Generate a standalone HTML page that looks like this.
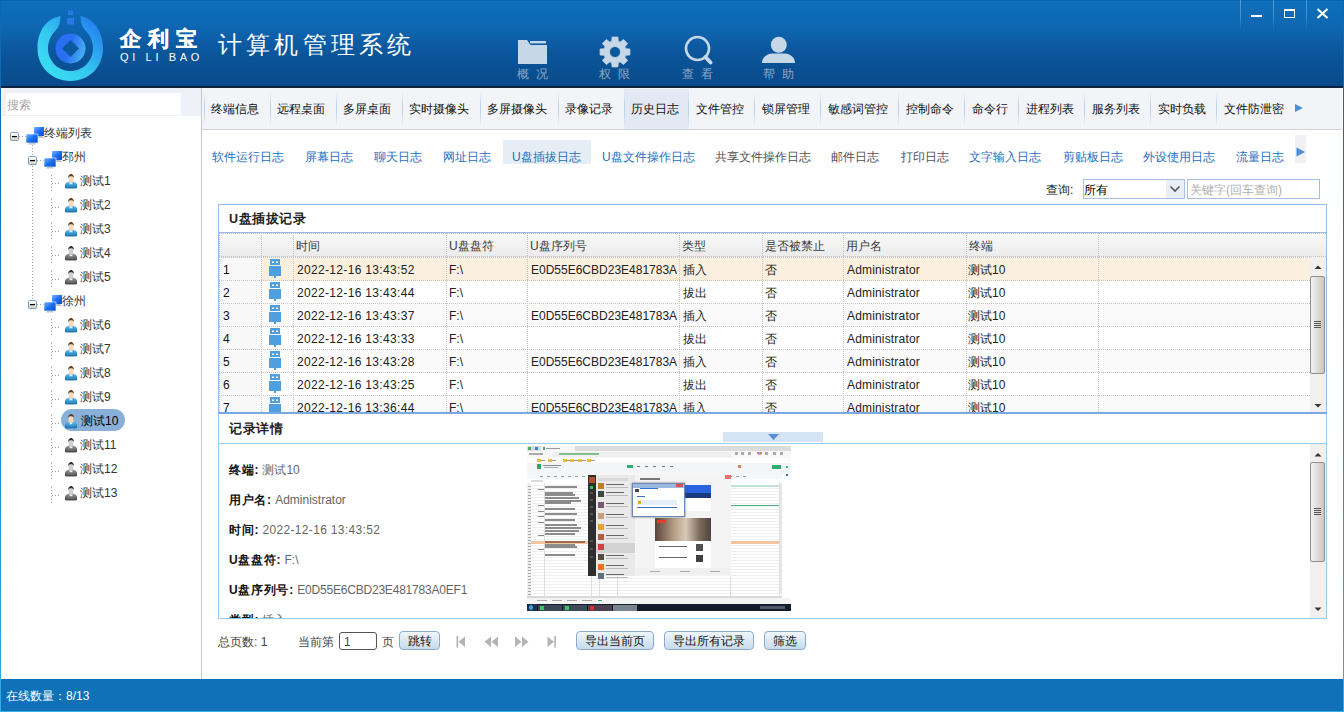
<!DOCTYPE html>
<html><head><meta charset="utf-8">
<style>
*{margin:0;padding:0;box-sizing:border-box}
html,body{width:1344px;height:712px;overflow:hidden;background:#fff}
body{position:relative;font-family:"Liberation Sans",sans-serif;font-size:12px;color:#222}
.a{position:absolute}
#hdr{left:0;top:0;width:1344px;height:87px;background:linear-gradient(#0f6fbb 0,#0e67b2 30%,#0b569c 60%,#094a8a 100%)}
#hdrline{left:0;top:86px;width:1344px;height:2px;background:linear-gradient(#07182c,#0c2a4a)}
.wsep{top:0;width:1px;height:30px;background:linear-gradient(rgba(150,200,240,.5),rgba(150,200,240,.35) 60%,rgba(150,200,240,0))}
.nt{white-space:nowrap;line-height:12px}
</style></head><body>
<div id="hdr" class="a"></div>
<div id="hdrline" class="a"></div>
<div class="a" style="left:0;top:0;width:1344px;height:1px;background:#0866ae"></div>


<!-- logo -->
<svg class="a" style="left:30px;top:5px" width="80" height="80" viewBox="30 5 80 80">
<defs>
<linearGradient id="rg" x1="0" y1="1" x2="1" y2="0">
<stop offset="0" stop-color="#3ee6f2"/><stop offset="0.45" stop-color="#35c8f0"/><stop offset="1" stop-color="#2070f0"/></linearGradient>
<linearGradient id="cg" x1="0" y1="0" x2="1" y2="0.3">
<stop offset="0" stop-color="#2a6ef0"/><stop offset="0.55" stop-color="#2a70f2"/><stop offset="1" stop-color="#46a8f4"/></linearGradient>
</defs>
<path d="M60.5 16 C46 19 37.5 31 37.5 48.5 C37.5 67 52 81 70.5 81 C89 81 103 67 103 48.5 C103 31 94 19 80.5 16 C80.5 22 82 27 85 30 C90 35 93 41 93 48.5 C93 61 83 71 70.5 71 C58 71 48 61 48 48.5 C48 41 51 35 56 30 C59 27 60.5 22 60.5 16 Z" fill="url(#rg)"/>
<circle cx="70.5" cy="48.5" r="15" fill="url(#cg)"/>
<path d="M70.5 40 L79 48.5 L70.5 57 L62 48.5 Z" fill="#0b5aa0"/>
<rect x="68" y="10.5" width="5" height="4.5" fill="#2a78e8"/>
<rect x="67" y="18" width="7" height="6.5" fill="#2a78e8"/>
</svg>
<div class="a nt" style="left:120px;top:28px;color:#fff;font-size:20.5px;font-weight:900;letter-spacing:7px;line-height:22px;-webkit-text-stroke:0.45px #fff">企利宝</div>
<div class="a nt" style="left:120px;top:52px;color:#fff;font-size:11px;letter-spacing:3.65px;line-height:11px">QI LI BAO</div>
<div class="a nt" style="left:218px;top:31px;color:#fff;font-size:24px;font-weight:300;letter-spacing:4.2px;line-height:28px">计算机管理系统</div>

<!-- header icons -->
<svg class="a" style="left:510px;top:30px" width="300" height="40" viewBox="510 30 300 40">
<g fill="#c6d7e8">
<path d="M518 40 H527 L530.5 45 H547 V64 H518 Z"/>
<rect x="530" y="41" width="16" height="2.4"/>
<path d="M611.73 41.29 L612.10 37.08 L617.90 37.08 L618.27 41.29 L620.26 42.11 L623.50 39.40 L627.60 43.50 L624.89 46.74 L625.71 48.73 L629.92 49.10 L629.92 54.90 L625.71 55.27 L624.89 57.26 L627.60 60.50 L623.50 64.60 L620.26 61.89 L618.27 62.71 L617.90 66.92 L612.10 66.92 L611.73 62.71 L609.74 61.89 L606.50 64.60 L602.40 60.50 L605.11 57.26 L604.29 55.27 L600.08 54.90 L600.08 49.10 L604.29 48.73 L605.11 46.74 L602.40 43.50 L606.50 39.40 L609.74 42.11 Z M620.5 52 A5.5 5.5 0 1 0 609.5 52 A5.5 5.5 0 1 0 620.5 52 Z" fill-rule="evenodd" stroke="#c6d7e8" stroke-width="0.8" stroke-linejoin="round"/>
<circle cx="778.8" cy="44.8" r="8"/>
<path d="M762 63 C762 57 767 54 772 53.5 L785 53.5 C790 54 795 57 795 63 Z"/>
</g>
<circle cx="697.5" cy="48.5" r="11.5" fill="none" stroke="#c6d7e8" stroke-width="2.6"/>
<path d="M705.5 57 L710.5 62.5" stroke="#c6d7e8" stroke-width="4" stroke-linecap="round"/>
</svg>
<div class="a nt" style="left:517px;top:68px;color:#8fa8c4;font-size:12px;letter-spacing:7px">概况</div>
<div class="a nt" style="left:599px;top:68px;color:#8fa8c4;font-size:12px;letter-spacing:7px">权限</div>
<div class="a nt" style="left:682px;top:68px;color:#8fa8c4;font-size:12px;letter-spacing:7px">查看</div>
<div class="a nt" style="left:763px;top:68px;color:#8fa8c4;font-size:12px;letter-spacing:7px">帮助</div>

<!-- window buttons -->
<div class="a wsep" style="left:1240px"></div>
<div class="a wsep" style="left:1273px"></div>
<div class="a wsep" style="left:1306px"></div>
<div class="a" style="left:1251px;top:15px;width:11px;height:2px;background:#fff"></div>
<div class="a" style="left:1284px;top:9px;width:11px;height:9px;border:1.6px solid #fff;border-top-width:2.6px"></div>
<svg class="a" style="left:1316px;top:8px" width="13" height="11" viewBox="0 0 13 11"><path d="M1.5 1 L11.5 10 M11.5 1 L1.5 10" stroke="#fff" stroke-width="2.2"/></svg>


<!-- left panel -->
<div class="a" style="left:2px;top:88px;width:199px;height:28px;background:#eef2f8"></div>
<div class="a" style="left:6px;top:93px;width:175px;height:22px;background:#fff"></div>
<div class="a nt" style="left:7px;top:99px;color:#a8a8a8">搜索</div>
<div class="a" style="left:201px;top:88px;width:1px;height:591px;background:#c8c8c8"></div>
<svg class="a" style="left:0;top:116px" width="201" height="400" viewBox="0 116 201 400">
<defs>
<linearGradient id="bx" x1="0" y1="0" x2="0" y2="1"><stop offset="0" stop-color="#fff"/><stop offset="1" stop-color="#d8d0c0"/></linearGradient>
<linearGradient id="mon" x1="0" y1="0" x2="1" y2="1"><stop offset="0" stop-color="#7ab8ff"/><stop offset="0.5" stop-color="#1a70f0"/><stop offset="1" stop-color="#0a50d0"/></linearGradient>
<g id="comp">
<rect x="8" y="0" width="10" height="9" fill="url(#mon)"/>
<path d="M10 9 h6 l2 2 h-8z" fill="#b8c0c8"/>
<rect x="0" y="7" width="12" height="9" fill="url(#mon)" stroke="#fff" stroke-width="0.6"/>
<path d="M3 16 h6 l1 1.5 h-8z" fill="#c0c8d0"/>
</g>
<g id="box">
<rect x="0.5" y="0.5" width="8" height="8" rx="1" fill="url(#bx)" stroke="#7a9cc0"/>
<rect x="2" y="4" width="5" height="1.2" fill="#000"/>
</g>
<radialGradient id="bodyb" cx="0.5" cy="0.1" r="0.9"><stop offset="0" stop-color="#7cc4f0"/><stop offset="0.6" stop-color="#3a98d0"/><stop offset="1" stop-color="#1e78b8"/></radialGradient>
<radialGradient id="bodyg" cx="0.5" cy="0.1" r="0.9"><stop offset="0" stop-color="#a8a8a8"/><stop offset="0.6" stop-color="#707070"/><stop offset="1" stop-color="#505050"/></radialGradient>
<g id="ub">
<path d="M0 14 V11.5 C0 9 3 7.6 6 7.6 C9 7.6 12 9 12 11.5 V14 Z" fill="url(#bodyb)"/>
<path d="M0.5 13.5 h11 l-0.5 1 h-10z" fill="#2a78b0"/>
<rect x="3.6" y="2" width="4.8" height="6.8" rx="1.5" fill="#f6d8bc"/>
<path d="M3.2 4 C3 1 5 0 6 0 C7.5 0 9 1 8.8 4 C8 2.5 7 2.3 6 2.3 C5 2.3 4 2.5 3.2 4Z" fill="#5e3c22"/>
<path d="M4.5 9 h3 l-1.5 1.4z" fill="#fff"/>
</g>
<g id="ug">
<path d="M0 14 V11.5 C0 9 3 7.6 6 7.6 C9 7.6 12 9 12 11.5 V14 Z" fill="url(#bodyg)"/>
<path d="M0.5 13.5 h11 l-0.5 1 h-10z" fill="#505050"/>
<rect x="3.6" y="2" width="4.8" height="6.8" rx="1.5" fill="#d0d0d0"/>
<path d="M3.2 4 C3 1 5 0 6 0 C7.5 0 9 1 8.8 4 C8 2.5 7 2.3 6 2.3 C5 2.3 4 2.5 3.2 4Z" fill="#303030"/>
<path d="M4.5 9 h3 l-1.5 1.4z" fill="#fff"/>
</g>
</defs>
<g stroke="#a0a0a0" stroke-width="1" stroke-dasharray="1 2" fill="none">
<path d="M32.5 142 V301"/>
<path d="M19 136.5 H26"/>
<path d="M37 160.5 H44"/>
<path d="M37 304.5 H44"/>
<path d="M51.5 175.0 V192.0"/><path d="M51.5 199.0 V216.0"/><path d="M51.5 223.0 V240.0"/><path d="M51.5 247.0 V264.0"/><path d="M51.5 271.0 V288.0"/><path d="M51.5 319.0 V336.0"/><path d="M51.5 343.0 V360.0"/><path d="M51.5 367.0 V384.0"/><path d="M51.5 391.0 V408.0"/><path d="M51.5 415.0 V432.0"/><path d="M51.5 439.0 V456.0"/><path d="M51.5 463.0 V480.0"/><path d="M51.5 487.0 V504.0"/>
</g>
<g stroke="#a0a0a0" stroke-width="1" stroke-dasharray="1 2" fill="none">
<path d="M52 183.5 H60"/><path d="M52 207.5 H60"/><path d="M52 231.5 H60"/><path d="M52 255.5 H60"/><path d="M52 279.5 H60"/>
<path d="M52 327.5 H60"/><path d="M52 351.5 H60"/><path d="M52 375.5 H60"/><path d="M52 399.5 H60"/><path d="M52 423.5 H60"/>
<path d="M52 447.5 H60"/><path d="M52 471.5 H60"/><path d="M52 495.5 H60"/>
</g>
<use href="#box" x="10" y="132"/>
<use href="#comp" x="26" y="127"/>
<use href="#box" x="28" y="156"/>
<use href="#comp" x="44" y="151"/>
<use href="#box" x="28" y="300"/>
<use href="#comp" x="44" y="295"/>
<rect x="61" y="409" width="64" height="22" rx="11" fill="#88b0d8"/>
<use href="#ub" x="65" y="174"/>
<use href="#ub" x="65" y="198"/>
<use href="#ub" x="65" y="222"/>
<use href="#ug" x="65" y="246"/>
<use href="#ug" x="65" y="270"/>
<use href="#ub" x="65" y="318"/>
<use href="#ub" x="65" y="342"/>
<use href="#ub" x="65" y="366"/>
<use href="#ub" x="65" y="390"/>
<use href="#ub" x="65" y="414"/>
<use href="#ug" x="65" y="438"/>
<use href="#ug" x="65" y="462"/>
<use href="#ug" x="65" y="486"/>
</svg>
<div class="a nt" style="left:44px;top:127px;color:#333">终端列表</div>
<div class="a nt" style="left:62px;top:151px;color:#333">邳州</div>
<div class="a nt" style="left:62px;top:295px;color:#333">徐州</div>
<div class="a nt" style="left:80px;top:175px;color:#333">测试1</div>
<div class="a nt" style="left:80px;top:199px;color:#333">测试2</div>
<div class="a nt" style="left:80px;top:223px;color:#333">测试3</div>
<div class="a nt" style="left:80px;top:247px;color:#333">测试4</div>
<div class="a nt" style="left:80px;top:271px;color:#333">测试5</div>
<div class="a nt" style="left:80px;top:319px;color:#333">测试6</div>
<div class="a nt" style="left:80px;top:343px;color:#333">测试7</div>
<div class="a nt" style="left:80px;top:367px;color:#333">测试8</div>
<div class="a nt" style="left:80px;top:391px;color:#333">测试9</div>
<div class="a nt" style="left:81px;top:415px;color:#000">测试10</div>
<div class="a nt" style="left:80px;top:439px;color:#333">测试11</div>
<div class="a nt" style="left:80px;top:463px;color:#333">测试12</div>
<div class="a nt" style="left:80px;top:487px;color:#333">测试13</div>


<!-- tab bar -->
<div class="a" style="left:202px;top:88px;width:1140px;height:41px;background:#f2f4f8"></div>
<div class="a" style="left:202px;top:129px;width:1140px;height:1px;background:#cfd3d8"></div>
<div class="a" style="left:204px;top:92px;width:1px;height:34px;background:linear-gradient(rgba(190,215,240,0),#b8d4f0 40%,#b8d4f0 60%,rgba(190,215,240,0))"></div>
<div class="a nt" style="left:211.1px;top:103px;color:#111">终端信息</div>
<div class="a" style="left:270px;top:92px;width:1px;height:34px;background:linear-gradient(rgba(190,215,240,0),#b8d4f0 40%,#b8d4f0 60%,rgba(190,215,240,0))"></div>
<div class="a nt" style="left:277.1px;top:103px;color:#111">远程桌面</div>
<div class="a" style="left:336px;top:92px;width:1px;height:34px;background:linear-gradient(rgba(190,215,240,0),#b8d4f0 40%,#b8d4f0 60%,rgba(190,215,240,0))"></div>
<div class="a nt" style="left:343.1px;top:103px;color:#111">多屏桌面</div>
<div class="a" style="left:402px;top:92px;width:1px;height:34px;background:linear-gradient(rgba(190,215,240,0),#b8d4f0 40%,#b8d4f0 60%,rgba(190,215,240,0))"></div>
<div class="a nt" style="left:409.1px;top:103px;color:#111">实时摄像头</div>
<div class="a" style="left:480px;top:92px;width:1px;height:34px;background:linear-gradient(rgba(190,215,240,0),#b8d4f0 40%,#b8d4f0 60%,rgba(190,215,240,0))"></div>
<div class="a nt" style="left:487.1px;top:103px;color:#111">多屏摄像头</div>
<div class="a" style="left:558px;top:92px;width:1px;height:34px;background:linear-gradient(rgba(190,215,240,0),#b8d4f0 40%,#b8d4f0 60%,rgba(190,215,240,0))"></div>
<div class="a nt" style="left:565.1px;top:103px;color:#111">录像记录</div>
<div class="a" style="left:624px;top:89px;width:65px;height:40px;background:#e2e9f2"></div>
<div class="a" style="left:624px;top:92px;width:1px;height:34px;background:linear-gradient(rgba(190,215,240,0),#b8d4f0 40%,#b8d4f0 60%,rgba(190,215,240,0))"></div>
<div class="a nt" style="left:631.1px;top:103px;color:#111">历史日志</div>
<div class="a" style="left:688px;top:92px;width:1px;height:34px;background:linear-gradient(rgba(190,215,240,0),#b8d4f0 40%,#b8d4f0 60%,rgba(190,215,240,0))"></div>
<div class="a nt" style="left:696.1px;top:103px;color:#111">文件管控</div>
<div class="a" style="left:754px;top:92px;width:1px;height:34px;background:linear-gradient(rgba(190,215,240,0),#b8d4f0 40%,#b8d4f0 60%,rgba(190,215,240,0))"></div>
<div class="a nt" style="left:762.1px;top:103px;color:#111">锁屏管理</div>
<div class="a" style="left:820px;top:92px;width:1px;height:34px;background:linear-gradient(rgba(190,215,240,0),#b8d4f0 40%,#b8d4f0 60%,rgba(190,215,240,0))"></div>
<div class="a nt" style="left:828.1px;top:103px;color:#111">敏感词管控</div>
<div class="a" style="left:898px;top:92px;width:1px;height:34px;background:linear-gradient(rgba(190,215,240,0),#b8d4f0 40%,#b8d4f0 60%,rgba(190,215,240,0))"></div>
<div class="a nt" style="left:906.1px;top:103px;color:#111">控制命令</div>
<div class="a" style="left:964px;top:92px;width:1px;height:34px;background:linear-gradient(rgba(190,215,240,0),#b8d4f0 40%,#b8d4f0 60%,rgba(190,215,240,0))"></div>
<div class="a nt" style="left:972.1px;top:103px;color:#111">命令行</div>
<div class="a" style="left:1018px;top:92px;width:1px;height:34px;background:linear-gradient(rgba(190,215,240,0),#b8d4f0 40%,#b8d4f0 60%,rgba(190,215,240,0))"></div>
<div class="a nt" style="left:1026.1px;top:103px;color:#111">进程列表</div>
<div class="a" style="left:1084px;top:92px;width:1px;height:34px;background:linear-gradient(rgba(190,215,240,0),#b8d4f0 40%,#b8d4f0 60%,rgba(190,215,240,0))"></div>
<div class="a nt" style="left:1092.1px;top:103px;color:#111">服务列表</div>
<div class="a" style="left:1150px;top:92px;width:1px;height:34px;background:linear-gradient(rgba(190,215,240,0),#b8d4f0 40%,#b8d4f0 60%,rgba(190,215,240,0))"></div>
<div class="a nt" style="left:1158.1px;top:103px;color:#111">实时负载</div>
<div class="a" style="left:1216px;top:92px;width:1px;height:34px;background:linear-gradient(rgba(190,215,240,0),#b8d4f0 40%,#b8d4f0 60%,rgba(190,215,240,0))"></div>
<div class="a nt" style="left:1224.1px;top:103px;color:#111">文件防泄密</div>
<svg class="a" style="left:1294px;top:103px" width="10" height="10"><path d="M1 1 L9 5 L1 9Z" fill="#4a90d8"/></svg>

<!-- sub tabs -->
<div class="a" style="left:503px;top:140px;width:88px;height:24px;background:#e6edf5"></div>
<div class="a" style="left:1295px;top:135px;width:11px;height:28px;background:#eef0f4"></div>
<svg class="a" style="left:1296px;top:147px" width="10" height="11"><path d="M0.5 0.5 L9 5 L0.5 9.5Z" fill="#4a90d8"/></svg>
<div class="a nt" style="left:212px;top:151px;color:#1d6fc2">软件运行日志</div>
<div class="a nt" style="left:305px;top:151px;color:#1d6fc2">屏幕日志</div>
<div class="a nt" style="left:374px;top:151px;color:#1d6fc2">聊天日志</div>
<div class="a nt" style="left:443px;top:151px;color:#1d6fc2">网址日志</div>
<div class="a nt" style="left:512px;top:151px;color:#1d6fc2">U盘插拔日志</div>
<div class="a nt" style="left:602px;top:151px;color:#1d6fc2">U盘文件操作日志</div>
<div class="a nt" style="left:715px;top:151px;color:#505050">共享文件操作日志</div>
<div class="a nt" style="left:831px;top:151px;color:#505050">邮件日志</div>
<div class="a nt" style="left:901px;top:151px;color:#505050">打印日志</div>
<div class="a nt" style="left:969px;top:151px;color:#1d6fc2">文字输入日志</div>
<div class="a nt" style="left:1063px;top:151px;color:#1d6fc2">剪贴板日志</div>
<div class="a nt" style="left:1143px;top:151px;color:#1d6fc2">外设使用日志</div>
<div class="a nt" style="left:1236px;top:151px;color:#1d6fc2">流量日志</div>


<!-- query -->
<div class="a nt" style="left:1046px;top:184px;color:#222">查询:</div>
<div class="a" style="left:1083px;top:179px;width:102px;height:20px;border:1px solid #a6bfe2;background:#fff"></div>
<div class="a" style="left:1166px;top:180px;width:18px;height:18px;background:#e8eff8"></div>
<svg class="a" style="left:1169px;top:185px" width="12" height="8"><path d="M1.5 1.5 L6 6 L10.5 1.5" stroke="#555" stroke-width="1.6" fill="none"/></svg>
<div class="a nt" style="left:1084px;top:184px;color:#000">所有</div>
<div class="a" style="left:1187px;top:179px;width:133px;height:20px;border:1px solid #a6bfe2;background:#fff"></div>
<div class="a nt" style="left:1190px;top:184px;color:#b0b0b0">关键字(回车查询)</div>

<!-- grid panel -->
<div class="a" style="left:218px;top:204px;width:1109px;height:210px;border:1px solid #99bbe8;border-bottom:2px solid #7aa8e0;background:#fff"></div>
<div class="a nt" style="left:229px;top:213px;color:#222;font-weight:bold;font-size:12.5px;letter-spacing:0.6px">U盘插拔记录</div>
<div class="a" style="left:219px;top:232px;width:1107px;height:1px;background:#99bbe8"></div>
<div class="a" style="left:219px;top:233px;width:1107px;height:24px;background:linear-gradient(#f9f9f9,#ebebeb)"></div>
<div class="a nt" style="left:296px;top:240px;color:#3c3c3c">时间</div>
<div class="a nt" style="left:449px;top:240px;color:#3c3c3c">U盘盘符</div>
<div class="a nt" style="left:530px;top:240px;color:#3c3c3c">U盘序列号</div>
<div class="a nt" style="left:682px;top:240px;color:#3c3c3c">类型</div>
<div class="a nt" style="left:765px;top:240px;color:#3c3c3c">是否被禁止</div>
<div class="a nt" style="left:846px;top:240px;color:#3c3c3c">用户名</div>
<div class="a nt" style="left:969px;top:240px;color:#3c3c3c">终端</div>
<div class="a" style="left:0;top:0;width:1344px;height:412px;overflow:hidden">
<div class="a" style="left:219px;top:257px;width:42px;height:155px;background:#f8f8f8"></div>
<div class="a" style="left:262px;top:258px;width:1048px;height:23px;background:#fbefdf"></div>
<div class="a nt" style="left:223px;top:264px;color:#111">1</div>
<svg class="a" style="left:269px;top:259px" width="12" height="20" viewBox="0 0 12 20"><rect x="1" y="0" width="10" height="6" fill="#4d9fe0"/><rect x="3" y="2.5" width="2" height="1.5" fill="#fff"/><rect x="7" y="2.5" width="2" height="1.5" fill="#fff"/><rect x="0" y="7" width="12" height="10" fill="#4d9fe0"/><rect x="5" y="17" width="2" height="2" fill="#4d9fe0"/></svg>
<div class="a nt" style="left:297px;top:264px;color:#222;letter-spacing:.33px">2022-12-16 13:43:52</div>
<div class="a nt" style="left:449px;top:264px;color:#222">F:\</div>
<div class="a nt" style="left:531px;top:264px;width:146px;overflow:hidden;color:#222">E0D55E6CBD23E481783A0EF1</div>
<div class="a nt" style="left:683px;top:264px;color:#222">插入</div>
<div class="a nt" style="left:765px;top:264px;color:#222">否</div>
<div class="a nt" style="left:847px;top:264px;color:#222;letter-spacing:.17px">Administrator</div>
<div class="a nt" style="left:968px;top:264px;color:#222">测试10</div>
<div class="a nt" style="left:223px;top:287px;color:#111">2</div>
<svg class="a" style="left:269px;top:282px" width="12" height="20" viewBox="0 0 12 20"><rect x="1" y="0" width="10" height="6" fill="#4d9fe0"/><rect x="3" y="2.5" width="2" height="1.5" fill="#fff"/><rect x="7" y="2.5" width="2" height="1.5" fill="#fff"/><rect x="0" y="7" width="12" height="10" fill="#4d9fe0"/><rect x="5" y="17" width="2" height="2" fill="#4d9fe0"/></svg>
<div class="a nt" style="left:297px;top:287px;color:#222;letter-spacing:.33px">2022-12-16 13:43:44</div>
<div class="a nt" style="left:449px;top:287px;color:#222">F:\</div>
<div class="a nt" style="left:683px;top:287px;color:#222">拔出</div>
<div class="a nt" style="left:765px;top:287px;color:#222">否</div>
<div class="a nt" style="left:847px;top:287px;color:#222;letter-spacing:.17px">Administrator</div>
<div class="a nt" style="left:968px;top:287px;color:#222">测试10</div>
<div class="a" style="left:262px;top:304px;width:1048px;height:23px;background:#fafafa"></div>
<div class="a nt" style="left:223px;top:310px;color:#111">3</div>
<svg class="a" style="left:269px;top:305px" width="12" height="20" viewBox="0 0 12 20"><rect x="1" y="0" width="10" height="6" fill="#4d9fe0"/><rect x="3" y="2.5" width="2" height="1.5" fill="#fff"/><rect x="7" y="2.5" width="2" height="1.5" fill="#fff"/><rect x="0" y="7" width="12" height="10" fill="#4d9fe0"/><rect x="5" y="17" width="2" height="2" fill="#4d9fe0"/></svg>
<div class="a nt" style="left:297px;top:310px;color:#222;letter-spacing:.33px">2022-12-16 13:43:37</div>
<div class="a nt" style="left:449px;top:310px;color:#222">F:\</div>
<div class="a nt" style="left:531px;top:310px;width:146px;overflow:hidden;color:#222">E0D55E6CBD23E481783A0EF1</div>
<div class="a nt" style="left:683px;top:310px;color:#222">插入</div>
<div class="a nt" style="left:765px;top:310px;color:#222">否</div>
<div class="a nt" style="left:847px;top:310px;color:#222;letter-spacing:.17px">Administrator</div>
<div class="a nt" style="left:968px;top:310px;color:#222">测试10</div>
<div class="a nt" style="left:223px;top:333px;color:#111">4</div>
<svg class="a" style="left:269px;top:328px" width="12" height="20" viewBox="0 0 12 20"><rect x="1" y="0" width="10" height="6" fill="#4d9fe0"/><rect x="3" y="2.5" width="2" height="1.5" fill="#fff"/><rect x="7" y="2.5" width="2" height="1.5" fill="#fff"/><rect x="0" y="7" width="12" height="10" fill="#4d9fe0"/><rect x="5" y="17" width="2" height="2" fill="#4d9fe0"/></svg>
<div class="a nt" style="left:297px;top:333px;color:#222;letter-spacing:.33px">2022-12-16 13:43:33</div>
<div class="a nt" style="left:449px;top:333px;color:#222">F:\</div>
<div class="a nt" style="left:683px;top:333px;color:#222">拔出</div>
<div class="a nt" style="left:765px;top:333px;color:#222">否</div>
<div class="a nt" style="left:847px;top:333px;color:#222;letter-spacing:.17px">Administrator</div>
<div class="a nt" style="left:968px;top:333px;color:#222">测试10</div>
<div class="a" style="left:262px;top:350px;width:1048px;height:23px;background:#fafafa"></div>
<div class="a nt" style="left:223px;top:356px;color:#111">5</div>
<svg class="a" style="left:269px;top:351px" width="12" height="20" viewBox="0 0 12 20"><rect x="1" y="0" width="10" height="6" fill="#4d9fe0"/><rect x="3" y="2.5" width="2" height="1.5" fill="#fff"/><rect x="7" y="2.5" width="2" height="1.5" fill="#fff"/><rect x="0" y="7" width="12" height="10" fill="#4d9fe0"/><rect x="5" y="17" width="2" height="2" fill="#4d9fe0"/></svg>
<div class="a nt" style="left:297px;top:356px;color:#222;letter-spacing:.33px">2022-12-16 13:43:28</div>
<div class="a nt" style="left:449px;top:356px;color:#222">F:\</div>
<div class="a nt" style="left:531px;top:356px;width:146px;overflow:hidden;color:#222">E0D55E6CBD23E481783A0EF1</div>
<div class="a nt" style="left:683px;top:356px;color:#222">插入</div>
<div class="a nt" style="left:765px;top:356px;color:#222">否</div>
<div class="a nt" style="left:847px;top:356px;color:#222;letter-spacing:.17px">Administrator</div>
<div class="a nt" style="left:968px;top:356px;color:#222">测试10</div>
<div class="a nt" style="left:223px;top:379px;color:#111">6</div>
<svg class="a" style="left:269px;top:374px" width="12" height="20" viewBox="0 0 12 20"><rect x="1" y="0" width="10" height="6" fill="#4d9fe0"/><rect x="3" y="2.5" width="2" height="1.5" fill="#fff"/><rect x="7" y="2.5" width="2" height="1.5" fill="#fff"/><rect x="0" y="7" width="12" height="10" fill="#4d9fe0"/><rect x="5" y="17" width="2" height="2" fill="#4d9fe0"/></svg>
<div class="a nt" style="left:297px;top:379px;color:#222;letter-spacing:.33px">2022-12-16 13:43:25</div>
<div class="a nt" style="left:449px;top:379px;color:#222">F:\</div>
<div class="a nt" style="left:683px;top:379px;color:#222">拔出</div>
<div class="a nt" style="left:765px;top:379px;color:#222">否</div>
<div class="a nt" style="left:847px;top:379px;color:#222;letter-spacing:.17px">Administrator</div>
<div class="a nt" style="left:968px;top:379px;color:#222">测试10</div>
<div class="a" style="left:262px;top:396px;width:1048px;height:23px;background:#fafafa"></div>
<div class="a nt" style="left:223px;top:402px;color:#111">7</div>
<svg class="a" style="left:269px;top:397px" width="12" height="20" viewBox="0 0 12 20"><rect x="1" y="0" width="10" height="6" fill="#4d9fe0"/><rect x="3" y="2.5" width="2" height="1.5" fill="#fff"/><rect x="7" y="2.5" width="2" height="1.5" fill="#fff"/><rect x="0" y="7" width="12" height="10" fill="#4d9fe0"/><rect x="5" y="17" width="2" height="2" fill="#4d9fe0"/></svg>
<div class="a nt" style="left:297px;top:402px;color:#222;letter-spacing:.33px">2022-12-16 13:36:44</div>
<div class="a nt" style="left:449px;top:402px;color:#222">F:\</div>
<div class="a nt" style="left:531px;top:402px;width:146px;overflow:hidden;color:#222">E0D55E6CBD23E481783A0EF1</div>
<div class="a nt" style="left:683px;top:402px;color:#222">插入</div>
<div class="a nt" style="left:765px;top:402px;color:#222">否</div>
<div class="a nt" style="left:847px;top:402px;color:#222;letter-spacing:.17px">Administrator</div>
<div class="a nt" style="left:968px;top:402px;color:#222">测试10</div>
</div>
<svg class="a" style="left:219px;top:233px" width="1107" height="180" viewBox="219 233 1107 180"><g stroke="#c4c4c4" stroke-width="1" stroke-dasharray="1 1" fill="none"><path d="M261.5 233 V412"/><path d="M219.5 233 V412"/><path d="M219 233.5 H1326"/><path d="M219 257.5 H1326"/><path d="M293.5 233 V412"/><path d="M446.5 233 V412"/><path d="M527.5 233 V412"/><path d="M679.5 233 V412"/><path d="M762.5 233 V412"/><path d="M843.5 233 V412"/><path d="M966.5 233 V412"/><path d="M1098.5 233 V412"/><path d="M219 256.5 H1326"/><path d="M219 280.5 H1310"/><path d="M219 303.5 H1310"/><path d="M219 326.5 H1310"/><path d="M219 349.5 H1310"/><path d="M219 372.5 H1310"/><path d="M219 395.5 H1310"/><path d="M219 418.5 H1310"/></g></svg>
<div class="a" style="left:1310px;top:257px;width:16px;height:155px;background:#f0f0f0"></div>
<svg class="a" style="left:1310px;top:257px" width="16" height="155"><path d="M4.5 12 L8 8.5 L11.5 12Z" fill="#333"/><path d="M4.5 147 L8 150.5 L11.5 147Z" fill="#333"/></svg>
<div class="a" style="left:1310px;top:276px;width:15px;height:98px;border:1px solid #8e8f8f;border-radius:2px;background:linear-gradient(90deg,#f2f2f2,#dcdcdc 50%,#c8c8c8)"></div>
<svg class="a" style="left:1313px;top:320px" width="9" height="9"><path d="M1 1.5 H8 M1 3.5 H8 M1 5.5 H8 M1 7.5 H8" stroke="#555" stroke-width="1"/></svg>


<!-- detail panel -->
<div class="a" style="left:218px;top:414px;width:1109px;height:205px;border:1px solid #99ccee;border-top:none;background:#fff"></div>
<div class="a" style="left:219px;top:443px;width:1107px;height:1px;background:#99ccee"></div>
<div class="a nt" style="left:229px;top:423px;color:#222;font-weight:bold;font-size:12.5px;letter-spacing:0.6px">记录详情</div>
<div class="a" style="left:723px;top:432px;width:100px;height:10px;background:#d4e4f4"></div>
<svg class="a" style="left:767px;top:433px" width="13" height="8"><path d="M1 1 H12 L6.5 7Z" fill="#5a8fd8"/></svg>
<div class="a" style="left:219px;top:444px;width:1091px;height:174px;overflow:hidden">
<div class="a nt" style="left:10px;top:20px;color:#666"><b style="color:#111;letter-spacing:0.7px">终端:</b> 测试10</div>
<div class="a nt" style="left:10px;top:50px;color:#666"><b style="color:#111;letter-spacing:0.7px">用户名:</b> Administrator</div>
<div class="a nt" style="left:10px;top:80px;color:#666"><b style="color:#111;letter-spacing:0.7px">时间:</b> <span style="letter-spacing:.33px">2022-12-16 13:43:52</span></div>
<div class="a nt" style="left:10px;top:110px;color:#666"><b style="color:#111;letter-spacing:0.7px">U盘盘符:</b> F:\</div>
<div class="a nt" style="left:10px;top:140px;color:#666"><b style="color:#111;letter-spacing:0.7px">U盘序列号:</b> <span style="letter-spacing:-.2px">E0D55E6CBD23E481783A0EF1</span></div>
<div class="a nt" style="left:10px;top:170px;color:#666"><b style="color:#111;letter-spacing:0.7px">类型:</b> 插入</div>
</div>
<!-- detail scrollbar -->
<div class="a" style="left:1310px;top:444px;width:16px;height:174px;background:#f0f0f0"></div>
<svg class="a" style="left:1310px;top:444px" width="16" height="174"><path d="M4.5 12.5 L8 9 L11.5 12.5Z" fill="#333"/><path d="M4.5 163.5 L8 167 L11.5 163.5Z" fill="#333"/></svg>
<div class="a" style="left:1310px;top:462px;width:15px;height:100px;border:1px solid #8e8f8f;border-radius:2px;background:linear-gradient(90deg,#f2f2f2,#dcdcdc 50%,#c8c8c8)"></div>
<svg class="a" style="left:1313px;top:507px" width="9" height="9"><path d="M1 1.5 H8 M1 3.5 H8 M1 5.5 H8 M1 7.5 H8" stroke="#555" stroke-width="1"/></svg>

<!-- screenshot thumbnail -->
<div class="a" style="left:527px;top:446px;width:264px;height:165px;overflow:hidden;background:#fff">
 <div class="a" style="left:0px;top:0px;width:264px;height:5px;background:#dcdcdc"></div>
 <div class="a" style="left:14px;top:0px;width:34px;height:5px;background:#f6f6f6"></div>
 <div class="a" style="left:1px;top:1px;width:3px;height:3px;background:#40b060"></div>
 <div class="a" style="left:8px;top:1px;width:3px;height:3px;background:#3080e0"></div>
 <div class="a" style="left:16px;top:1px;width:2px;height:3px;background:#40b060"></div>
 <div class="a" style="left:19px;top:2px;width:14px;height:1px;background:#999"></div>
 <div class="a" style="left:0px;top:5px;width:264px;height:7px;background:#f8f8f8"></div>
 <div class="a" style="left:25px;top:6px;width:180px;height:5px;background:#efefef"></div>
 <div class="a" style="left:32px;top:7px;width:40px;height:2px;background:#80c090"></div>
 <div class="a" style="left:2px;top:7px;width:14px;height:2px;background:#aaa"></div>
 <div class="a" style="left:208px;top:6px;width:3px;height:3px;background:#aaa"></div>
 <div class="a" style="left:214px;top:6px;width:3px;height:3px;background:#aaa"></div>
 <div class="a" style="left:221px;top:6px;width:3px;height:3px;background:#aaa"></div>
 <div class="a" style="left:231px;top:6px;width:3px;height:3px;background:#aaa"></div>
 <div class="a" style="left:238px;top:6px;width:3px;height:3px;background:#aaa"></div>
 <div class="a" style="left:246px;top:6px;width:3px;height:3px;background:#aaa"></div>
 <div class="a" style="left:253px;top:6px;width:3px;height:3px;background:#aaa"></div>
 <div class="a" style="left:230px;top:6px;width:2px;height:2px;background:#a080f0"></div>
 <div class="a" style="left:233px;top:6px;width:2px;height:2px;background:#f08040"></div>
 <div class="a" style="left:0px;top:12px;width:264px;height:5px;background:#fdfdfd"></div>
 <div class="a" style="left:10px;top:13px;width:4px;height:3px;background:#f0b840"></div>
 <div class="a" style="left:14px;top:14px;width:4px;height:1px;background:#999"></div>
 <div class="a" style="left:21px;top:13px;width:4px;height:3px;background:#f0b840"></div>
 <div class="a" style="left:25px;top:14px;width:4px;height:1px;background:#999"></div>
 <div class="a" style="left:36px;top:13px;width:4px;height:3px;background:#f0b840"></div>
 <div class="a" style="left:40px;top:14px;width:4px;height:1px;background:#999"></div>
 <div class="a" style="left:43px;top:13px;width:4px;height:3px;background:#f0b840"></div>
 <div class="a" style="left:47px;top:14px;width:4px;height:1px;background:#999"></div>
 <div class="a" style="left:51px;top:13px;width:4px;height:3px;background:#f0b840"></div>
 <div class="a" style="left:55px;top:14px;width:4px;height:1px;background:#999"></div>
 <div class="a" style="left:60px;top:13px;width:4px;height:3px;background:#f0b840"></div>
 <div class="a" style="left:64px;top:14px;width:4px;height:1px;background:#999"></div>
 <div class="a" style="left:0px;top:17px;width:264px;height:11px;background:#f3f5f7"></div>
 <div class="a" style="left:10px;top:18px;width:4px;height:5px;background:#30a860"></div>
 <div class="a" style="left:16px;top:19px;width:18px;height:1px;background:#888"></div>
 <div class="a" style="left:17px;top:21px;width:14px;height:1px;background:#aaa"></div>
 <div class="a" style="left:100px;top:19px;width:6px;height:3px;background:#30b070"></div>
 <div class="a" style="left:110px;top:20px;width:3px;height:1px;background:#777"></div>
 <div class="a" style="left:118px;top:20px;width:3px;height:1px;background:#777"></div>
 <div class="a" style="left:126px;top:20px;width:3px;height:1px;background:#777"></div>
 <div class="a" style="left:135px;top:20px;width:3px;height:1px;background:#777"></div>
 <div class="a" style="left:143px;top:20px;width:3px;height:1px;background:#777"></div>
 <div class="a" style="left:211px;top:19px;width:3px;height:3px;background:#e08060"></div>
 <div class="a" style="left:245px;top:19px;width:9px;height:4px;background:#30b070"></div>
 <div class="a" style="left:259px;top:20px;width:2px;height:2px;background:#30c0a0"></div>
 <div class="a" style="left:259px;top:28px;width:2px;height:2px;background:#3070d0"></div>
 <div class="a" style="left:0px;top:28px;width:255px;height:5px;background:#f6f7f8"></div>
 <div class="a" style="left:13px;top:30px;width:3px;height:1px;background:#999"></div>
 <div class="a" style="left:20px;top:30px;width:3px;height:1px;background:#999"></div>
 <div class="a" style="left:27px;top:30px;width:3px;height:1px;background:#999"></div>
 <div class="a" style="left:34px;top:30px;width:3px;height:1px;background:#999"></div>
 <div class="a" style="left:41px;top:30px;width:3px;height:1px;background:#999"></div>
 <div class="a" style="left:48px;top:30px;width:3px;height:1px;background:#999"></div>
 <div class="a" style="left:55px;top:30px;width:3px;height:1px;background:#999"></div>
 <div class="a" style="left:62px;top:30px;width:3px;height:1px;background:#999"></div>
 <div class="a" style="left:69px;top:30px;width:3px;height:1px;background:#999"></div>
 <div class="a" style="left:76px;top:30px;width:3px;height:1px;background:#999"></div>
 <div class="a" style="left:83px;top:30px;width:3px;height:1px;background:#999"></div>
 <div class="a" style="left:90px;top:30px;width:3px;height:1px;background:#999"></div>
 <div class="a" style="left:97px;top:30px;width:3px;height:1px;background:#999"></div>
 <div class="a" style="left:104px;top:30px;width:3px;height:1px;background:#999"></div>
 <div class="a" style="left:111px;top:30px;width:3px;height:1px;background:#999"></div>
 <div class="a" style="left:118px;top:30px;width:3px;height:1px;background:#999"></div>
 <div class="a" style="left:125px;top:30px;width:3px;height:1px;background:#999"></div>
 <div class="a" style="left:132px;top:30px;width:3px;height:1px;background:#999"></div>
 <div class="a" style="left:139px;top:30px;width:3px;height:1px;background:#999"></div>
 <div class="a" style="left:146px;top:30px;width:3px;height:1px;background:#999"></div>
 <div class="a" style="left:153px;top:30px;width:3px;height:1px;background:#999"></div>
 <div class="a" style="left:160px;top:30px;width:3px;height:1px;background:#999"></div>
 <div class="a" style="left:167px;top:30px;width:3px;height:1px;background:#999"></div>
 <div class="a" style="left:174px;top:30px;width:3px;height:1px;background:#999"></div>
 <div class="a" style="left:181px;top:30px;width:3px;height:1px;background:#999"></div>
 <div class="a" style="left:188px;top:30px;width:3px;height:1px;background:#999"></div>
 <div class="a" style="left:195px;top:30px;width:3px;height:1px;background:#999"></div>
 <div class="a" style="left:202px;top:30px;width:3px;height:1px;background:#999"></div>
 <div class="a" style="left:209px;top:30px;width:3px;height:1px;background:#999"></div>
 <div class="a" style="left:216px;top:30px;width:3px;height:1px;background:#999"></div>
 <div class="a" style="left:0px;top:33px;width:255px;height:4px;background:#fff"></div>
 <div class="a" style="left:4px;top:34px;width:12px;height:2px;background:#ddd"></div>
<div class="a" style="left:0;top:37px;width:255px;height:113px;background:repeating-linear-gradient(#fff 0,#fff 2px,#f0f0f0 2px,#f0f0f0 3px)"></div>
 <div class="a" style="left:0px;top:37px;width:4px;height:113px;background:#f0f0f0"></div>
 <div class="a" style="left:17px;top:37px;width:1px;height:113px;background:#dedede"></div>
 <div class="a" style="left:64px;top:37px;width:1px;height:113px;background:#dedede"></div>
 <div class="a" style="left:72px;top:37px;width:1px;height:113px;background:#dedede"></div>
 <div class="a" style="left:90px;top:37px;width:1px;height:113px;background:#dedede"></div>
 <div class="a" style="left:203px;top:37px;width:1px;height:113px;background:#dedede"></div>
 <div class="a" style="left:252px;top:37px;width:1px;height:113px;background:#dedede"></div>
 <div class="a" style="left:18px;top:40px;width:32px;height:2px;background:#8c8c8c"></div>
 <div class="a" style="left:11px;top:43px;width:6px;height:1px;background:#888"></div>
 <div class="a" style="left:18px;top:46px;width:28px;height:2px;background:#8c8c8c"></div>
 <div class="a" style="left:18px;top:48px;width:30px;height:2px;background:#8c8c8c"></div>
 <div class="a" style="left:18px;top:51px;width:34px;height:2px;background:#8c8c8c"></div>
 <div class="a" style="left:18px;top:54px;width:36px;height:2px;background:#8c8c8c"></div>
 <div class="a" style="left:18px;top:56px;width:26px;height:2px;background:#8c8c8c"></div>
 <div class="a" style="left:11px;top:59px;width:6px;height:1px;background:#888"></div>
 <div class="a" style="left:18px;top:62px;width:30px;height:2px;background:#8c8c8c"></div>
 <div class="a" style="left:11px;top:65px;width:6px;height:1px;background:#888"></div>
 <div class="a" style="left:18px;top:67px;width:32px;height:2px;background:#8c8c8c"></div>
 <div class="a" style="left:11px;top:70px;width:6px;height:1px;background:#888"></div>
 <div class="a" style="left:18px;top:73px;width:30px;height:2px;background:#8c8c8c"></div>
 <div class="a" style="left:11px;top:76px;width:6px;height:1px;background:#888"></div>
 <div class="a" style="left:18px;top:78px;width:32px;height:2px;background:#8c8c8c"></div>
 <div class="a" style="left:18px;top:81px;width:36px;height:2px;background:#8c8c8c"></div>
 <div class="a" style="left:18px;top:84px;width:34px;height:2px;background:#8c8c8c"></div>
 <div class="a" style="left:18px;top:87px;width:30px;height:2px;background:#8c8c8c"></div>
 <div class="a" style="left:11px;top:89px;width:6px;height:1px;background:#888"></div>
 <div class="a" style="left:18px;top:95px;width:40px;height:2px;background:#8c8c8c"></div>
 <div class="a" style="left:18px;top:98px;width:30px;height:2px;background:#8c8c8c"></div>
 <div class="a" style="left:18px;top:100px;width:32px;height:2px;background:#8c8c8c"></div>
 <div class="a" style="left:11px;top:103px;width:6px;height:1px;background:#888"></div>
 <div class="a" style="left:18px;top:108px;width:30px;height:2px;background:#8c8c8c"></div>
 <div class="a" style="left:1px;top:40px;width:3px;height:1px;background:#aaa"></div>
 <div class="a" style="left:1px;top:43px;width:3px;height:1px;background:#aaa"></div>
 <div class="a" style="left:1px;top:46px;width:3px;height:1px;background:#aaa"></div>
 <div class="a" style="left:1px;top:49px;width:3px;height:1px;background:#aaa"></div>
 <div class="a" style="left:1px;top:52px;width:3px;height:1px;background:#aaa"></div>
 <div class="a" style="left:1px;top:55px;width:3px;height:1px;background:#aaa"></div>
 <div class="a" style="left:1px;top:58px;width:3px;height:1px;background:#aaa"></div>
 <div class="a" style="left:1px;top:61px;width:3px;height:1px;background:#aaa"></div>
 <div class="a" style="left:1px;top:64px;width:3px;height:1px;background:#aaa"></div>
 <div class="a" style="left:1px;top:67px;width:3px;height:1px;background:#aaa"></div>
 <div class="a" style="left:1px;top:70px;width:3px;height:1px;background:#aaa"></div>
 <div class="a" style="left:1px;top:73px;width:3px;height:1px;background:#aaa"></div>
 <div class="a" style="left:1px;top:76px;width:3px;height:1px;background:#aaa"></div>
 <div class="a" style="left:1px;top:79px;width:3px;height:1px;background:#aaa"></div>
 <div class="a" style="left:1px;top:82px;width:3px;height:1px;background:#aaa"></div>
 <div class="a" style="left:1px;top:85px;width:3px;height:1px;background:#aaa"></div>
 <div class="a" style="left:1px;top:88px;width:3px;height:1px;background:#aaa"></div>
 <div class="a" style="left:1px;top:91px;width:3px;height:1px;background:#aaa"></div>
 <div class="a" style="left:1px;top:94px;width:3px;height:1px;background:#aaa"></div>
 <div class="a" style="left:1px;top:97px;width:3px;height:1px;background:#aaa"></div>
 <div class="a" style="left:1px;top:100px;width:3px;height:1px;background:#aaa"></div>
 <div class="a" style="left:1px;top:103px;width:3px;height:1px;background:#aaa"></div>
 <div class="a" style="left:1px;top:106px;width:3px;height:1px;background:#aaa"></div>
 <div class="a" style="left:1px;top:109px;width:3px;height:1px;background:#aaa"></div>
 <div class="a" style="left:1px;top:112px;width:3px;height:1px;background:#aaa"></div>
 <div class="a" style="left:1px;top:115px;width:3px;height:1px;background:#aaa"></div>
 <div class="a" style="left:1px;top:118px;width:3px;height:1px;background:#aaa"></div>
 <div class="a" style="left:1px;top:121px;width:3px;height:1px;background:#aaa"></div>
 <div class="a" style="left:1px;top:124px;width:3px;height:1px;background:#aaa"></div>
 <div class="a" style="left:1px;top:127px;width:3px;height:1px;background:#aaa"></div>
 <div class="a" style="left:1px;top:130px;width:3px;height:1px;background:#aaa"></div>
 <div class="a" style="left:1px;top:133px;width:3px;height:1px;background:#aaa"></div>
 <div class="a" style="left:1px;top:136px;width:3px;height:1px;background:#aaa"></div>
 <div class="a" style="left:1px;top:139px;width:3px;height:1px;background:#aaa"></div>
 <div class="a" style="left:1px;top:142px;width:3px;height:1px;background:#aaa"></div>
 <div class="a" style="left:1px;top:145px;width:3px;height:1px;background:#aaa"></div>
 <div class="a" style="left:1px;top:148px;width:3px;height:1px;background:#aaa"></div>
 <div class="a" style="left:4px;top:95px;width:248px;height:3px;background:#f4c4a0"></div>
 <div class="a" style="left:18px;top:95px;width:40px;height:2px;background:#9a6a50"></div>
 <div class="a" style="left:204px;top:39px;width:48px;height:2px;background:#bfe3d0"></div>
 <div class="a" style="left:204px;top:59px;width:48px;height:1px;background:#50b080"></div>
 <div class="a" style="left:255px;top:37px;width:9px;height:113px;background:#fff"></div>
 <div class="a" style="left:253px;top:37px;width:2px;height:110px;background:#e8e8e8"></div>
 <div class="a" style="left:0px;top:150px;width:255px;height:2px;background:#d8d8d8"></div>
 <div class="a" style="left:0px;top:152px;width:264px;height:6px;background:#f4f4f4"></div>
 <div class="a" style="left:10px;top:154px;width:10px;height:1px;background:#aaa"></div>
 <div class="a" style="left:25px;top:154px;width:10px;height:1px;background:#aaa"></div>
 <div class="a" style="left:40px;top:154px;width:10px;height:1px;background:#aaa"></div>
 <div class="a" style="left:55px;top:154px;width:10px;height:1px;background:#aaa"></div>
 <div class="a" style="left:70px;top:153px;width:6px;height:3px;background:#fff"></div>
 <div class="a" style="left:71px;top:154px;width:4px;height:1px;background:#40b060"></div>
 <div class="a" style="left:0px;top:158px;width:264px;height:7px;background:#141c2c"></div>
 <div class="a" style="left:0px;top:158px;width:10px;height:7px;background:#1c3050"></div>
 <div class="a" style="left:2px;top:159px;width:4px;height:5px;background:#40a0e0; border-radius:50%"></div>
 <div class="a" style="left:11px;top:159px;width:24px;height:6px;background:#3a4654"></div>
 <div class="a" style="left:13px;top:160px;width:4px;height:4px;background:#40c060"></div>
 <div class="a" style="left:36px;top:159px;width:24px;height:6px;background:#3e4a58"></div>
 <div class="a" style="left:38px;top:160px;width:4px;height:4px;background:#40c060"></div>
 <div class="a" style="left:61px;top:159px;width:24px;height:6px;background:#4a4050"></div>
 <div class="a" style="left:63px;top:160px;width:4px;height:4px;background:#e03030"></div>
 <div class="a" style="left:86px;top:159px;width:24px;height:6px;background:#7a8290"></div>
 <div class="a" style="left:233px;top:160px;width:25px;height:3px;background:#505a68"></div>
 <div class="a" style="left:61px;top:29px;width:8px;height:101px;background:#2e2e2e"></div>
 <div class="a" style="left:62px;top:31px;width:6px;height:6px;background:#b05030"></div>
 <div class="a" style="left:63px;top:40px;width:3px;height:3px;background:#30c060"></div>
 <div class="a" style="left:63px;top:46px;width:3px;height:2px;background:#555"></div>
 <div class="a" style="left:63px;top:53px;width:3px;height:2px;background:#555"></div>
 <div class="a" style="left:63px;top:60px;width:3px;height:2px;background:#555"></div>
 <div class="a" style="left:63px;top:67px;width:3px;height:2px;background:#555"></div>
 <div class="a" style="left:63px;top:74px;width:3px;height:2px;background:#555"></div>
 <div class="a" style="left:63px;top:94px;width:3px;height:2px;background:#555"></div>
 <div class="a" style="left:63px;top:102px;width:3px;height:2px;background:#555"></div>
 <div class="a" style="left:63px;top:110px;width:3px;height:2px;background:#555"></div>
 <div class="a" style="left:69px;top:29px;width:39px;height:101px;background:#e9e9e9"></div>
 <div class="a" style="left:71px;top:32px;width:30px;height:3px;background:#d8d8d8"></div>
 <div class="a" style="left:71px;top:37px;width:6px;height:6px;background:#c08020"></div>
 <div class="a" style="left:79px;top:38px;width:18px;height:1px;background:#666"></div>
 <div class="a" style="left:79px;top:41px;width:22px;height:1px;background:#bbb"></div>
 <div class="a" style="left:71px;top:45px;width:6px;height:6px;background:#3a4a40"></div>
 <div class="a" style="left:79px;top:46px;width:18px;height:1px;background:#666"></div>
 <div class="a" style="left:79px;top:49px;width:22px;height:1px;background:#bbb"></div>
 <div class="a" style="left:71px;top:56px;width:6px;height:6px;background:#7a5a70"></div>
 <div class="a" style="left:79px;top:57px;width:18px;height:1px;background:#666"></div>
 <div class="a" style="left:79px;top:60px;width:22px;height:1px;background:#bbb"></div>
 <div class="a" style="left:71px;top:67px;width:6px;height:6px;background:#c8a080"></div>
 <div class="a" style="left:79px;top:68px;width:18px;height:1px;background:#666"></div>
 <div class="a" style="left:79px;top:71px;width:22px;height:1px;background:#bbb"></div>
 <div class="a" style="left:71px;top:78px;width:6px;height:6px;background:#e8a030"></div>
 <div class="a" style="left:79px;top:79px;width:18px;height:1px;background:#666"></div>
 <div class="a" style="left:79px;top:82px;width:22px;height:1px;background:#bbb"></div>
 <div class="a" style="left:71px;top:88px;width:6px;height:6px;background:#b06040"></div>
 <div class="a" style="left:79px;top:89px;width:18px;height:1px;background:#666"></div>
 <div class="a" style="left:79px;top:92px;width:22px;height:1px;background:#bbb"></div>
 <div class="a" style="left:71px;top:98px;width:6px;height:6px;background:#d04040"></div>
 <div class="a" style="left:79px;top:99px;width:18px;height:1px;background:#666"></div>
 <div class="a" style="left:79px;top:102px;width:22px;height:1px;background:#bbb"></div>
 <div class="a" style="left:71px;top:108px;width:6px;height:6px;background:#554a40"></div>
 <div class="a" style="left:79px;top:109px;width:18px;height:1px;background:#666"></div>
 <div class="a" style="left:79px;top:112px;width:22px;height:1px;background:#bbb"></div>
 <div class="a" style="left:71px;top:118px;width:6px;height:6px;background:#f07020"></div>
 <div class="a" style="left:79px;top:119px;width:18px;height:1px;background:#666"></div>
 <div class="a" style="left:79px;top:122px;width:22px;height:1px;background:#bbb"></div>
 <div class="a" style="left:71px;top:127px;width:6px;height:6px;background:#607080"></div>
 <div class="a" style="left:79px;top:128px;width:18px;height:1px;background:#666"></div>
 <div class="a" style="left:79px;top:131px;width:22px;height:1px;background:#bbb"></div>
 <div class="a" style="left:69px;top:97px;width:39px;height:10px;background:#d2d2d2"></div>
 <div class="a" style="left:71px;top:98px;width:6px;height:6px;background:#d04040"></div>
 <div class="a" style="left:108px;top:29px;width:96px;height:101px;background:#f4f4f4"></div>
 <div class="a" style="left:113px;top:32px;width:20px;height:2px;background:#777"></div>
 <div class="a" style="left:198px;top:29px;width:6px;height:4px;background:#f07070"></div>
 <div class="a" style="left:128px;top:39px;width:56px;height:8px;background:#2a62e0"></div>
 <div class="a" style="left:128px;top:47px;width:56px;height:5px;background:#1a3a80"></div>
 <div class="a" style="left:128px;top:52px;width:56px;height:13px;background:#fff"></div>
 <div class="a" style="left:128px;top:72px;width:56px;height:23px;background:#8a7464;background:linear-gradient(90deg,#5a4438 0,#b8a088 35%,#d8c8b8 55%,#7a6a5c 80%,#504440 100%)"></div>
 <div class="a" style="left:130px;top:74px;width:9px;height:3px;background:#e04030"></div>
 <div class="a" style="left:128px;top:95px;width:56px;height:34px;background:#fff"></div>
 <div class="a" style="left:132px;top:100px;width:28px;height:1px;background:#666"></div>
 <div class="a" style="left:169px;top:98px;width:7px;height:7px;background:#505050"></div>
 <div class="a" style="left:132px;top:111px;width:28px;height:1px;background:#666"></div>
 <div class="a" style="left:169px;top:109px;width:7px;height:7px;background:#404040"></div>
 <div class="a" style="left:109px;top:122px;width:94px;height:7px;background:#f0f0f0"></div>
 <div class="a" style="left:123px;top:125px;width:10px;height:1px;background:#aaa"></div>
 <div class="a" style="left:153px;top:125px;width:10px;height:1px;background:#aaa"></div>
 <div class="a" style="left:183px;top:125px;width:10px;height:1px;background:#aaa"></div>
 <div class="a" style="left:105px;top:37px;width:53px;height:34px;background:#fff;border:1px solid #6a88b8;box-shadow:0 0 2px #666"></div>
 <div class="a" style="left:106px;top:38px;width:51px;height:4px;background:#9ab8e0"></div>
 <div class="a" style="left:149px;top:38px;width:7px;height:3px;background:#e05050"></div>
 <div class="a" style="left:108px;top:43px;width:4px;height:3px;background:#444"></div>
 <div class="a" style="left:113px;top:42px;width:18px;height:1px;background:#3a70c8"></div>
 <div class="a" style="left:110px;top:50px;width:8px;height:1px;background:#3a70c8"></div>
 <div class="a" style="left:110px;top:54px;width:40px;height:5px;background:#e4eef8"></div>
 <div class="a" style="left:111px;top:55px;width:3px;height:3px;background:#e0b020"></div>
 <div class="a" style="left:110px;top:61px;width:40px;height:1px;background:#3a70c8"></div>
</div>

<!-- pagination -->
<div class="a nt" style="left:218px;top:636px;color:#444">总页数: 1</div>
<div class="a nt" style="left:298px;top:636px;color:#444">当前第</div>
<div class="a" style="left:339px;top:632px;width:38px;height:18px;border:1px solid #555;border-radius:3px;background:#fff"></div>
<div class="a nt" style="left:344px;top:636px;color:#444">1</div>
<div class="a nt" style="left:382px;top:636px;color:#444">页</div>
<svg class="a" style="left:450px;top:630px" width="120" height="20" viewBox="450 630 120 20"><g fill="#b4b4b4">
<rect x="456.5" y="636" width="1.6" height="11.5"/><path d="M465 636.5 V647 L458.5 641.75Z"/>
<path d="M491 636.5 V647 L484.5 641.75Z"/><path d="M498 636.5 V647 L491.5 641.75Z"/>
<path d="M515 636.5 V647 L521.5 641.75Z"/><path d="M522 636.5 V647 L528.5 641.75Z"/>
<path d="M547.5 636.5 V647 L554 641.75Z"/><rect x="554.3" y="636" width="1.6" height="11.5"/>
</g></svg>
<div class="a nt" style="left:399px;top:631px;width:41px;height:19px;border:1px solid #8aabcb;border-radius:4px;background:linear-gradient(#f0f6fb,#d6e6f2 60%,#c8dcec);text-align:center;line-height:19px;color:#111">跳转</div>
<div class="a nt" style="left:576px;top:631px;width:78px;height:19px;border:1px solid #8aabcb;border-radius:4px;background:linear-gradient(#f0f6fb,#d6e6f2 60%,#c8dcec);text-align:center;line-height:19px;color:#111">导出当前页</div>
<div class="a nt" style="left:664px;top:631px;width:90px;height:19px;border:1px solid #8aabcb;border-radius:4px;background:linear-gradient(#f0f6fb,#d6e6f2 60%,#c8dcec);text-align:center;line-height:19px;color:#111">导出所有记录</div>
<div class="a nt" style="left:764px;top:631px;width:42px;height:19px;border:1px solid #8aabcb;border-radius:4px;background:linear-gradient(#f0f6fb,#d6e6f2 60%,#c8dcec);text-align:center;line-height:19px;color:#111">筛选</div>

<!-- status bar -->
<div class="a" style="left:0;top:679px;width:1344px;height:33px;background:#1070b8"></div>
<div class="a" style="left:0;top:711px;width:1344px;height:1px;background:#3ab0e8"></div>
<div class="a nt" style="left:6px;top:690px;color:#fff;font-size:12px">在线数量：8/13</div>

<!-- window borders -->
<div class="a" style="left:0;top:0;width:1px;height:712px;background:linear-gradient(#0c68b0,#0f6cb4 15%,#1a88c8 55%,#30aee8)"></div>
<div class="a" style="left:1343px;top:0;width:1px;height:712px;background:linear-gradient(#0c68b0,#0f6cb4 15%,#1a88c8 55%,#30aee8)"></div>

</body></html>
